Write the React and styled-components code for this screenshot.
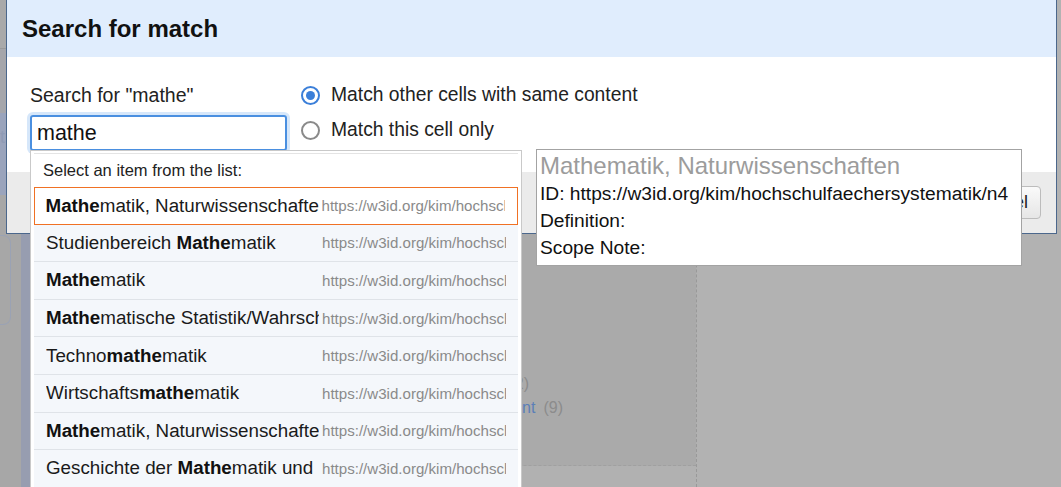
import React from "react";
import styled, { createGlobalStyle } from "styled-components";

const GlobalStyle = createGlobalStyle`
  html, body {
    margin: 0;
    padding: 0;
    height: 100%;
    overflow: hidden;
    background: #b1b1b1;
    font-family: "Liberation Sans", Arial, sans-serif;
  }
  #root { height: 100%; }
`;

const Page = styled.div`
  position: relative;
  display: grid;
  grid-template-columns: 21px 9px 667px 1fr;
  height: 487px;
  width: 1061px;
  overflow: hidden;
`;

const LeftRail = styled.div`
  display: flex;
  flex-direction: column;
  background: #a7a7a7;
`;

const RailBlock = styled.div`
  height: ${(p) => p.h}px;
  background: ${(p) => p.bg};
  border-bottom: ${(p) => (p.line ? "1px solid #999" : "none")};
  color: #8f9bb5;
  font-size: 18px;
  padding-top: ${(p) => p.pt || 0}px;
  overflow: hidden;
`;

const RailBox = styled.div`
  height: 88px;
  width: 10px;
  margin-top: 40px;
  border: 1px solid #9aa2b4;
  border-left: none;
  border-radius: 0 8px 8px 0;
`;

const BlueStrip = styled.div`
  background: #979db0;
`;

const MainPane = styled.div`
  display: flex;
  flex-direction: column;
  border-right: 1px dashed #999;
`;

const MainArea = styled.div`
  height: 466px;
  background: #aaaaaa;
  border-bottom: 1px dashed #a0a0a0;
  padding-top: 372px;
  box-sizing: border-box;
`;

const Facet = styled.div`
  width: ${(p) => p.w}px;
  text-align: right;
  font-size: 16px;
  line-height: 24px;
  color: #8c8c8c;
`;

const FacetLink = styled.span`
  color: #5a7fb8;
  margin-right: 8px;
`;

const RightPane = styled.div`
  background: #b2b2b2;
`;

const Dialog = styled.div`
  position: absolute;
  left: 6px;
  top: 0;
  width: 1051px;
  height: 234px;
  box-sizing: border-box;
  border: 1px solid #4b678c;
  border-top: none;
  display: flex;
  flex-direction: column;
  background: #fff;
`;

const DialogHeader = styled.div`
  height: 57px;
  background: #e0edfd;
  display: flex;
  align-items: center;
  padding-left: 15px;
  font-size: 24px;
  font-weight: bold;
  color: #111;
`;

const DialogBody = styled.div`
  height: 115px;
  display: flex;
  gap: 14px;
  padding: 25px 0 0 23px;
  box-sizing: border-box;
`;

const Field = styled.div`
  display: flex;
  flex-direction: column;
  gap: 7px;
`;

const Label = styled.div`
  font-size: 19.5px;
  color: #222;
  line-height: 26px;
`;

const Input = styled.div`
  width: 257px;
  height: 36px;
  box-sizing: border-box;
  border: 2px solid #4a8fe0;
  border-radius: 3px;
  box-shadow: 0 0 0 3px #d6e7fa;
  padding-left: 5px;
  font-size: 21.5px;
  line-height: 32px;
  color: #111;
`;

const Radios = styled.div`
  display: flex;
  flex-direction: column;
  gap: 9px;
`;

const RadioRow = styled.label`
  display: flex;
  align-items: center;
  gap: 11px;
  font-size: 19.3px;
  line-height: 26px;
  color: #222;
`;

const RadioDot = styled.span`
  width: 19px;
  height: 19px;
  box-sizing: border-box;
  border-radius: 50%;
  border: 2px solid ${(p) => (p.checked ? "#3b7fd9" : "#8a8a8a")};
  display: flex;
  align-items: center;
  justify-content: center;
  &::after {
    content: "";
    width: 9px;
    height: 9px;
    border-radius: 50%;
    background: ${(p) => (p.checked ? "#3b7fd9" : "transparent")};
  }
`;

const DialogFooter = styled.div`
  flex: 1;
  background: #ebebeb;
  display: flex;
  justify-content: flex-end;
  align-items: center;
  padding-right: 15px;
`;

const Button = styled.button`
  height: 33px;
  padding: 0 12px;
  border: 1px solid #bcbcbc;
  border-radius: 4px;
  background: linear-gradient(#fafafa, #e6e6e6);
  font-family: inherit;
  font-size: 18px;
  color: #222;
`;

const Dropdown = styled.div`
  position: absolute;
  left: 30px;
  top: 150px;
  width: 492px;
  height: 360px;
  box-sizing: border-box;
  border: 1px solid #c9c9c9;
  background: #fff;
  padding: 2px 3px;
  display: flex;
  flex-direction: column;
`;

const DropHeader = styled.div`
  height: 34px;
  display: flex;
  align-items: center;
  padding-left: 9px;
  font-size: 16.5px;
  color: #222;
  border-top: 1px solid #e4e4e4;
  box-sizing: border-box;
`;

const Item = styled.div`
  height: 37.6px;
  flex-shrink: 0;
  box-sizing: border-box;
  display: flex;
  align-items: center;
  padding: 0 12px;
  gap: 3px;
  border: ${(p) => (p.active ? "1.5px solid #f07124" : "none")};
  border-bottom: ${(p) => (p.active ? "1.5px solid #f07124" : "1px solid #dfe3e8")};
  background: ${(p) => (p.active ? "#fff" : "#f4f7fb")};
  padding-left: ${(p) => (p.active ? 10.5 : 12)}px;
`;

const ItemLabel = styled.div`
  width: 273px;
  flex-shrink: 0;
  overflow: hidden;
  white-space: nowrap;
  font-size: 18.8px;
  color: #1a1a1a;
  b { font-weight: bold; color: #111; }
`;

const ItemUrl = styled.div`
  width: 186px;
  overflow: hidden;
  white-space: nowrap;
  font-size: 15.1px;
  color: #8a8a8a;
`;

const InfoBox = styled.div`
  position: absolute;
  left: 536px;
  top: 149px;
  width: 486px;
  height: 117px;
  box-sizing: border-box;
  border: 1px solid #a3a3a3;
  background: #fff;
  padding: 2px 0 0 3px;
  display: flex;
  flex-direction: column;
`;

const InfoTitle = styled.div`
  font-size: 24px;
  line-height: 28px;
  color: #9c9c9c;
`;

const InfoLine = styled.div`
  font-size: 19.2px;
  line-height: 27px;
  color: #111;
  white-space: nowrap;
`;

const items = [
  { pre: "", bold: "Mathe", post: "matik, Naturwissenschaften" },
  { pre: "Studienbereich ", bold: "Mathe", post: "matik" },
  { pre: "", bold: "Mathe", post: "matik" },
  { pre: "", bold: "Mathe", post: "matische Statistik/Wahrscheinlichkeitsrechnung" },
  { pre: "Techno", bold: "mathe", post: "matik" },
  { pre: "Wirtschafts", bold: "mathe", post: "matik" },
  { pre: "", bold: "Mathe", post: "matik, Naturwissenschaften" },
  { pre: "Geschichte der ", bold: "Mathe", post: "matik und Naturwissenschaften" },
];

export default function App() {
  return (
    <>
      <GlobalStyle />
      <Page>
        <LeftRail>
          <RailBlock h={48} bg="#a9a9a9" line />
          <RailBlock h={64} bg="#a5a6ab" />
          <RailBlock h={68} bg="#9aa4bc" pt={14}>t</RailBlock>
          <RailBox />
        </LeftRail>
        <BlueStrip />
        <MainPane>
          <MainArea>
            <Facet w={499}>
              <FacetLink>Informatik</FacetLink>(12)
            </Facet>
            <Facet w={533}>
              <FacetLink>Management</FacetLink>(9)
            </Facet>
          </MainArea>
        </MainPane>
        <RightPane />

        <Dialog>
          <DialogHeader>Search for match</DialogHeader>
          <DialogBody>
            <Field>
              <Label>Search for "mathe"</Label>
              <Input>mathe</Input>
            </Field>
            <Radios>
              <RadioRow>
                <RadioDot checked />
                Match other cells with same content
              </RadioRow>
              <RadioRow>
                <RadioDot />
                Match this cell only
              </RadioRow>
            </Radios>
          </DialogBody>
          <DialogFooter>
            <Button>Cancel</Button>
          </DialogFooter>
        </Dialog>

        <Dropdown>
          <DropHeader>Select an item from the list:</DropHeader>
          {items.map((it, i) => (
            <Item key={i} active={i === 0}>
              <ItemLabel>
                {it.pre}
                <b>{it.bold}</b>
                {it.post}
              </ItemLabel>
              <ItemUrl>https://w3id.org/kim/hochschulfaechersystematik/n4</ItemUrl>
            </Item>
          ))}
        </Dropdown>

        <InfoBox>
          <InfoTitle>Mathematik, Naturwissenschaften</InfoTitle>
          <InfoLine>ID: https://w3id.org/kim/hochschulfaechersystematik/n4</InfoLine>
          <InfoLine>Definition:</InfoLine>
          <InfoLine>Scope Note:</InfoLine>
        </InfoBox>
      </Page>
    </>
  );
}
